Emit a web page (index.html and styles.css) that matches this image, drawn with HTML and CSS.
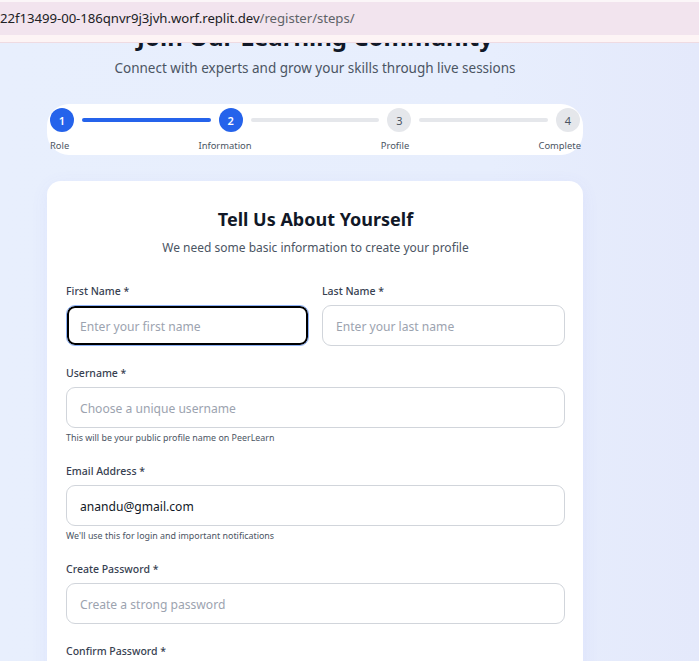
FILE: index.html
```html
<!DOCTYPE html>
<html lang="en">
<head>
<meta charset="utf-8">
<title>Register - PeerLearn</title>
<link rel="stylesheet" href="styles.css">
</head>
<body>
<div class="urlbar">
  <div class="url"><span class="domain">22f13499-00-186qnvr9j3jvh.worf.replit.dev</span><span class="path">/register/steps/</span></div>
  <div class="urlstrip"></div>
</div>
<main class="page">
  <div class="wrap">
    <h1 class="hero-title">Join Our Learning Community</h1>
    <p class="hero-sub">Connect with experts and grow your skills through live sessions</p>

    <div class="stepper">
      <div class="steps">
        <div class="dot active">1</div>
        <div class="bar done"></div>
        <div class="dot active">2</div>
        <div class="bar"></div>
        <div class="dot">3</div>
        <div class="bar"></div>
        <div class="dot">4</div>
      </div>
      <div class="labels">
        <span>Role</span>
        <span>Information</span>
        <span>Profile</span>
        <span>Complete</span>
      </div>
    </div>

    <section class="card">
      <h2 class="card-title">Tell Us About Yourself</h2>
      <p class="card-sub">We need some basic information to create your profile</p>

      <div class="row">
        <div class="field">
          <label class="label">First Name *</label>
          <input class="input focused" type="text" placeholder="Enter your first name">
        </div>
        <div class="field">
          <label class="label">Last Name *</label>
          <input class="input" type="text" placeholder="Enter your last name">
        </div>
      </div>

      <div class="field group">
        <label class="label">Username *</label>
        <input class="input" type="text" placeholder="Choose a unique username">
        <p class="help">This will be your public profile name on PeerLearn</p>
      </div>

      <div class="field group">
        <label class="label">Email Address *</label>
        <input class="input" type="email" value="anandu@gmail.com">
        <p class="help">We'll use this for login and important notifications</p>
      </div>

      <div class="field group">
        <label class="label">Create Password *</label>
        <input class="input" type="password" placeholder="Create a strong password">
      </div>

      <div class="field group">
        <label class="label">Confirm Password *</label>
        <input class="input" type="password" placeholder="Confirm your password">
      </div>
    </section>
  </div>
</main>
</body>
</html>
```
FILE: styles.css
```css
* { box-sizing: border-box; }
html, body { margin: 0; padding: 0; }
body {
  font-family: "Noto Sans", "Open Sans", sans-serif;
  background: linear-gradient(90deg, #e8effd 0%, #e7eefd 70%, #e4e9fb 100%);
  min-height: 661px;
  overflow: hidden;
  color: #111827;
}
.urlbar {
  position: fixed;
  top: 0; left: 0; right: 0;
  z-index: 10;
  background: #fbf6f8;
  padding-top: 2px;
}
.url {
  height: 33px;
  background: #f2e4ee;
  display: flex;
  align-items: center;
  font-size: 13.2px;
  letter-spacing: -0.05px;
  white-space: nowrap;
  padding-bottom: 1px;
}
.domain { color: #202124; }
.path { color: #5f6368; }
.urlstrip {
  height: 8px;
  background: #fdf4f5;
  border-bottom: 1px solid #efdbe2;
}
.page { padding-top: 21px; }
.wrap {
  width: 536px;
  margin-left: 47px;
}
.hero-title {
  margin: 0;
  font-size: 24px;
  line-height: 32px;
  font-weight: 700;
  text-align: center;
  color: #111827;
}
.hero-sub {
  margin: 5px 0 0;
  font-size: 13.5px;
  line-height: 20px;
  text-align: center;
  color: #4b5563;
}
.stepper {
  margin-top: 26px;
  background: #fff;
  border-radius: 22px;
  padding: 4px 3px 3px;
  height: 51px;
}
.steps {
  display: flex;
  align-items: center;
}
.dot {
  width: 24px;
  height: 24px;
  border-radius: 50%;
  background: #e5e7eb;
  color: #4b5563;
  font-size: 11px;
  display: flex;
  align-items: center;
  justify-content: center;
  flex: none;
}
.dot.active {
  background: #2563eb;
  color: #fff;
  font-weight: 600;
}
.bar {
  flex: 1;
  height: 4px;
  border-radius: 2px;
  background: #e5e7eb;
  margin: 0 8px;
}
.bar.done { background: #2563eb; }
.labels {
  display: flex;
  justify-content: space-between;
  margin-top: 7px;
  margin-right: -1px;
  font-size: 9.4px;
  line-height: 14px;
  color: #4b5563;
}
.card {
  margin-top: 26px;
  background: #fff;
  border-radius: 14px;
  box-shadow: 0 4px 18px rgba(99, 102, 241, 0.07);
  padding: 24px 18px 40px 19px;
}
.card-title {
  margin: 0;
  font-size: 18px;
  line-height: 28px;
  font-weight: 700;
  text-align: center;
  color: #111827;
}
.card-sub {
  margin: 5px 0 0;
  font-size: 12px;
  line-height: 20px;
  text-align: center;
  color: #4b5563;
}
.row {
  margin-top: 25px;
  display: grid;
  grid-template-columns: 1fr 1fr;
  gap: 13px;
}
.field { display: flex; flex-direction: column; }
.group { margin-top: 19px; }
.label {
  font-size: 10.5px;
  line-height: 16px;
  font-weight: 500;
  color: #374151;
  margin-bottom: 6px;
}
.input {
  height: 41px;
  border: 1px solid #d1d5db;
  border-radius: 9px;
  padding: 1px 13px 0;
  font-family: inherit;
  font-size: 12.1px;
  color: #111827;
  background: #fff;
  outline: none;
}
.input::placeholder { color: #9ca3af; }
.input.focused {
  border: 1px solid #8db1f5;
  box-shadow: inset 0 0 0 2px #000;
}
.help {
  margin: 4px 0 0;
  font-size: 8.9px;
  line-height: 12px;
  color: #4b5563;
}
```
